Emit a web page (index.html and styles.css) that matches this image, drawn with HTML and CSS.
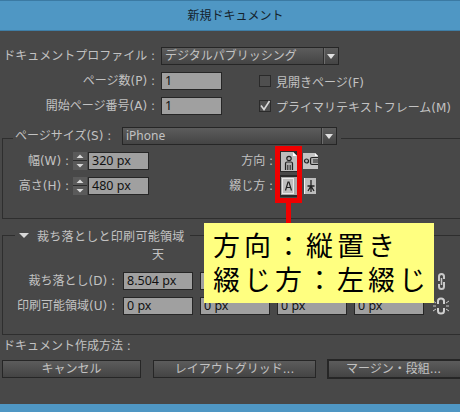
FILE: index.html
```html
<!DOCTYPE html>
<html lang="ja">
<head>
<meta charset="utf-8">
<title>新規ドキュメント</title>
<link rel="stylesheet" href="styles.css">
</head>
<body>
<div class="dialog">
  <header class="titlebar">新規ドキュメント</header>
  <section class="top">
    <div class="row">
      <label class="lab lab-top">ドキュメントプロファイル :</label>
      <div class="select select-profile"><span>デジタルパブリッシング</span><i class="arrow"></i></div>
    </div>
    <div class="row">
      <label class="lab lab-top">ページ数(P) :</label>
      <div class="input input-short">1</div>
      <div class="check"><span class="box-check"></span><span>見開きページ(F)</span></div>
    </div>
    <div class="row">
      <label class="lab lab-top">開始ページ番号(A) :</label>
      <div class="input input-short">1</div>
      <div class="check"><span class="box-check"><svg viewBox="0 0 12 12" width="12" height="12"><path d="M2 5.500 5 9.500 10.500 1" fill="none" stroke="#d8d8d8" stroke-width="1.600"/></svg></span><span>プライマリテキストフレーム(M)</span></div>
    </div>
  </section>

  <section class="group group-size">
    <div class="legend legend-size">
      <span class="legend-text">ページサイズ(S) :</span>
      <div class="select select-size"><span>iPhone</span><i class="arrow"></i></div>
    </div>
    <div class="size-row">
      <label class="lab lab-size">幅(W) :</label>
      <svg class="spin" viewBox="0 0 14 18" width="14" height="18"><rect width="14" height="18" fill="#5a5a5a"/><path d="M0 8.500H14" stroke="#2c2c2c"/><path d="M3.500 6 7 2.500 10.500 6Z M3.500 12H10.500L7 15.500Z" fill="#d8d8d8"/></svg>
      <div class="input input-size">320 px</div>
      <label class="lab lab-dir">方向 :</label>
      <span class="icon icon-on"><svg viewBox="0 0 16 19" width="16" height="19"><path d="M0 0H12L16 4V19H0Z" fill="#bdbdbd"/><path d="M12 0V4H16Z" fill="#fff"/><circle cx="8" cy="6.500" r="2.200" fill="#b4b4b4" stroke="#222" stroke-width="1.200"/><path d="M4.500 18V11.500Q4.500 10 6 10H10Q11.500 10 11.500 11.500V18" fill="#b0b0b0" stroke="#222" stroke-width="1.200"/><path d="M6.800 13V18M9.200 13V18" stroke="#222"/></svg></span>
      <span class="icon icon-land"><svg viewBox="0 0 15 16" width="15" height="16"><path d="M0 0H12L15 3V16H0Z" fill="#c4c4c4"/><path d="M12 0V3H15Z" fill="#fff"/><circle cx="3.500" cy="8" r="2" fill="#b4b4b4" stroke="#222" stroke-width="1.200"/><path d="M15 4.500H9Q7.500 4.500 7.500 6V10Q7.500 11.500 9 11.500H15" fill="#b0b0b0" stroke="#222" stroke-width="1.200"/><path d="M10 7H15M10 9H15" stroke="#222"/></svg></span>
    </div>
    <div class="size-row">
      <label class="lab lab-size">高さ(H) :</label>
      <svg class="spin" viewBox="0 0 14 18" width="14" height="18"><rect width="14" height="18" fill="#5a5a5a"/><path d="M0 8.500H14" stroke="#2c2c2c"/><path d="M3.500 6 7 2.500 10.500 6Z M3.500 12H10.500L7 15.500Z" fill="#d8d8d8"/></svg>
      <div class="input input-size">480 px</div>
      <label class="lab lab-dir">綴じ方 :</label>
      <span class="icon icon-on"><svg viewBox="0 0 16 18" width="16" height="18"><rect width="16" height="18" fill="#a8a8a8"/><rect x="1.500" y="1.500" width="11" height="15" fill="#bdbdbd" stroke="#e8e8e8"/><path d="M4.500 13.500 7 5H8L10.500 13.500M5.500 10.500H9.500" fill="none" stroke="#222" stroke-width="1.200"/></svg></span>
      <span class="icon icon-bind"><svg viewBox="0 0 12 16" width="12" height="16"><rect width="12" height="16" fill="#bdbdbd"/><path d="M.5 0V16" stroke="#f4f4f4"/><path d="M7 2V14M3.500 8H10.500M4 13 7 8 10 13" fill="none" stroke="#222" stroke-width="1.300"/></svg></span>
    </div>
  </section>

  <section class="group group-bleed">
    <div class="legend legend-bleed">
      <i class="tri"></i><span class="bleed-title">裁ち落としと印刷可能領域</span>
    </div>
    <div class="bleed-row sky-row">
      <span class="lab-bleed"></span>
      <span class="sky">天</span>
    </div>
    <div class="bleed-row">
      <label class="lab lab-bleed">裁ち落とし(D) :</label>
      <div class="input input-bleed">8.504 px</div>
      <div class="input input-bleed"></div>
      <div class="input input-bleed"></div>
      <div class="input input-bleed"></div>
      <svg class="link" viewBox="0 0 11 17" width="11" height="17"><path d="M3 8V3.500Q3 1 5.500 1T8 3.500V6M3 11V13.500Q3 16 5.500 16T8 13.500V9" fill="none" stroke="#c8c8c8" stroke-width="2"/><path d="M5.500 5V12" stroke="#c8c8c8" stroke-width="1.500"/></svg>
    </div>
    <div class="bleed-row">
      <label class="lab lab-bleed">印刷可能領域(U) :</label>
      <div class="input input-bleed">0 px</div>
      <div class="input input-bleed">0 px</div>
      <div class="input input-bleed">0 px</div>
      <div class="input input-bleed">0 px</div>
      <svg class="unlink" viewBox="0 0 16 18" width="16" height="18"><path d="M5 7V4Q5 1.500 8 1.500T11 4V7M5 11V14Q5 16.500 8 16.500T11 14V11" fill="none" stroke="#d0d0d0" stroke-width="2"/><path d="M0 4 3 6M0 9H3M0 14 3 12M16 4 13 6M16 9H13M16 14 13 12" stroke="#c8c8c8"/></svg>
    </div>
  </section>

  <div class="method">ドキュメント作成方法 :</div>
  <div class="buttons">
    <div class="btn btn-cancel">キャンセル</div>
    <div class="btn btn-layout">レイアウトグリッド...</div>
    <div class="btn btn-margin">マージン・段組...</div>
  </div>
  <div class="spacer"></div>
  <footer class="bottombar"></footer>

  <div class="callout-box"></div>
  <div class="callout-line"></div>
  <div class="callout-note">方向：縦置き<br>綴じ方：左綴じ</div>
</div>
</body>
</html>
```

FILE: styles.css
```css
* { box-sizing: border-box; }
html, body { margin: 0; padding: 0; }
body {
  width: 460px;
  height: 412px;
  overflow: hidden;
  font-family: "DejaVu Sans", "Noto Sans CJK JP", sans-serif;
  font-size: 12px;
  color: #c2c2c2;
  background: #484848;
}
.dialog {
  position: relative;
  width: 460px;
  height: 412px;
  display: flex;
  flex-direction: column;
  overflow: hidden;
  background: #484848;
}
.titlebar {
  flex: none;
  height: 31px;
  background: #4f97c4;
  border-top: 1px solid #3b7aa3;
  border-bottom: 1px solid #3f7ea6;
  color: #14222b;
  text-align: center;
  line-height: 31px;
  padding-left: 11px;
  font-size: 12px;
}
.top {
  flex: none;
  padding-top: 16px;
  display: flex;
  flex-direction: column;
  gap: 7px;
}
.row { display: flex; align-items: center; height: 18px; }
.lab {
  flex: none;
  text-align: right;
  white-space: pre;
  line-height: 18px;
}
.lab-top { width: 155px; margin-right: 6px; }
.select {
  flex: none;
  display: flex;
  align-items: center;
  height: 18px;
  padding-left: 3px;
  border: 1px solid #262626;
  background: linear-gradient(#5c5c5c, #444);
  line-height: 16px;
  position: relative;
  font-family: "Noto Sans", "Noto Sans CJK JP", sans-serif;
}
.select span { flex: 1; }
.arrow {
  flex: none;
  width: 14px;
  height: 16px;
  margin-right: 1px;
  border-left: 1px solid #2e2e2e;
  box-shadow: inset 1px 0 0 #6e6e6e;
  position: relative;
}
.arrow::after {
  content: "";
  position: absolute;
  left: 3px;
  top: 6px;
  border-left: 4px solid transparent;
  border-right: 4px solid transparent;
  border-top: 5px solid #e0e0e0;
}
.select-profile { width: 178px; }
.select-size { width: 215px; }
.input {
  flex: none;
  height: 18px;
  border: 1px solid #262626;
  background: #a0a0a0;
  color: #111;
  padding-left: 3px;
  line-height: 16px;
  font-family: "Noto Sans", "Noto Sans CJK JP", sans-serif;
  font-size: 12.500px;
}
.input-short { width: 61px; }
.check {
  flex: none;
  display: flex;
  align-items: center;
  gap: 5px;
  margin-left: 37px;
}
.box-check {
  display: block;
  width: 12px;
  height: 12px;
  border: 1px solid #2a2a2a;
  background: #4f4f4f;
  position: relative;
}
.box-check svg { position: absolute; left: -1px; top: -1px; }

.group {
  flex: none;
  width: 462px;
  margin-left: 2px;
  border: 1px solid #2e2e2e;
}
.group-size { height: 81px; margin-top: 23px; }
.group-bleed { height: 100px; margin-top: 16px; }
.legend {
  display: flex;
  width: fit-content;
  align-items: center;
  background: #484848;
  height: 18px;
  margin-top: -10px;
}
.legend-size { margin-left: 10px; padding: 0 4px 0 2px; margin-top: -12px; }
.legend-bleed { margin-left: 12px; padding: 0 5px 0 4px; gap: 8px; }
.bleed-title { letter-spacing: .3px; }
.legend-text { width: 107px; line-height: 18px; white-space: pre; }
.tri {
  width: 0;
  height: 0;
  border-left: 5px solid transparent;
  border-right: 5px solid transparent;
  border-top: 5px solid #d8d8d8;
}
.size-row {
  display: flex;
  align-items: center;
  height: 18px;
  margin-bottom: 7px;
}
.legend-size + .size-row { margin-top: 7px; }
.lab-size { width: 66px; margin-right: 4px; }
.spin { flex: none; }
.input-size { width: 61px; margin-left: 1px; }
.lab-dir { width: 124px; }
.icon { flex: none; display: flex; align-items: center; justify-content: center; }
.icon-on { width: 18px; height: 22px; margin-left: 7px; background: #2a2a2a; }
.icon-land { margin-left: 5px; }
.icon-bind { margin-left: 6px; }

.bleed-row {
  display: flex;
  align-items: center;
  height: 18px;
  margin-bottom: 7px;
  gap: 7px;
}
.sky-row { margin: 2px 0 8px; }
.sky { flex: none; width: 70px; text-align: center; line-height: 18px; }
.lab-bleed { flex: none; width: 112px; margin-right: 1px; }
.input-bleed { width: 70px; }
.link { flex: none; margin-left: 5px; }
.unlink { flex: none; margin-left: 2px; }

.method { flex: none; margin: 2px 0 0 3px; height: 18px; line-height: 18px; }
.buttons { flex: none; display: flex; align-items: center; height: 20px; margin-top: 4px; }
.btn {
  flex: none;
  height: 18px;
  border: 1px solid #262626;
  background: linear-gradient(#5c5c5c, #444);
  text-align: center;
  line-height: 16px;
}
.btn-cancel { width: 139px; margin-left: 2px; }
.btn-layout { width: 163px; margin-left: 12px; }
.btn-margin { width: 136px; height: 20px; margin-left: 11px; border-width: 2px; line-height: 16px; padding-right: 3px; }
.spacer { flex: 1; }
.bottombar { flex: none; height: 8px; background: #4f97c4; }

.callout-box {
  position: absolute;
  left: 275px;
  top: 146px;
  width: 27px;
  height: 57px;
  border: 5px solid #f00000;
}
.callout-line {
  position: absolute;
  left: 286px;
  top: 203px;
  width: 5px;
  height: 20px;
  background: #f00000;
}
.callout-note {
  position: absolute;
  left: 204px;
  top: 223px;
  width: 230px;
  height: 80px;
  background: #ffff80;
  color: #000;
  padding: 7px 0 0 9px;
  font-size: 27px;
  line-height: 34px;
  letter-spacing: 4px;
  white-space: nowrap;
}
```
